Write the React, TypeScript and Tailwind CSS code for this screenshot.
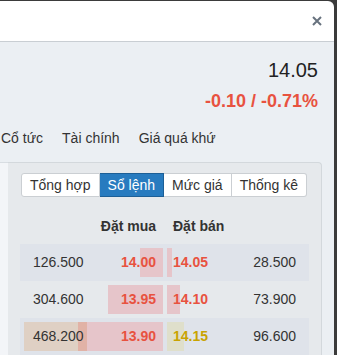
import React from "react";

type Row = {
  bv: string;
  bp: string;
  sp: string;
  sv: string;
  bw: number;
  sw: number;
  striped: boolean;
  vol?: number;
  yellow?: boolean;
};

const rows: Row[] = [
  { bv: "126.500", bp: "14.00", sp: "14.05", sv: "28.500", bw: 23, sw: 5, striped: true },
  { bv: "304.600", bp: "13.95", sp: "14.10", sv: "73.900", bw: 55, sw: 13, striped: false },
  { bv: "468.200", bp: "13.90", sp: "14.15", sv: "96.600", bw: 85, sw: 17, striped: true, vol: 63, yellow: true },
];

export default function App() {
  return (
    <div className="w-[337px] h-[355px] overflow-hidden bg-[#3b3b3b] pt-[1px] pr-[3px] font-['Liberation_Sans',Arial,sans-serif] text-[#333]">
      <div className="h-full bg-white rounded-tr-[6px] flex flex-col overflow-hidden">
        {/* header */}
        <div className="h-[41px] shrink-0 border-b border-[#c9ced3] flex items-center justify-end pr-[12px]">
          <svg width="10" height="10" viewBox="0 0 10 10" className="block">
            <path d="M1 1 L9 9 M9 1 L1 9" stroke="#67727e" strokeWidth="2" strokeLinecap="butt" />
          </svg>
        </div>
        {/* body */}
        <div className="flex-1 bg-[#ebeff3] flex flex-col">
          <div className="pt-[16px] pr-[16px] text-right">
            <div className="text-[20px] leading-[24px] text-[#222]">14.05</div>
            <div className="mt-[8px] text-[18px] leading-[22px] font-bold text-[#e8523f]">-0.10 / -0.71%</div>
          </div>
          <div className="mt-[16px] pl-[1px] flex gap-[19px] text-[14px] leading-[20px] text-[#333] whitespace-nowrap">
            <span>Cổ tức</span>
            <span>Tài chính</span>
            <span>Giá quá khứ</span>
          </div>
          <div className="mt-[14px] flex-1 flex">
            <div className="w-[8px] shrink-0 bg-[#f3f5f8] border-t border-[#d8dde2]" />
            <div className="w-[314px] shrink-0 bg-[#e6e9ec] border-t border-r border-[#d3d8dc] rounded-tr-[4px] px-[12px] pt-[10px]">
              {/* segmented */}
              <div className="mx-[1px] flex h-[24px] text-[14px] whitespace-nowrap">
                <div className="shrink-0 flex items-center px-[8px] border border-[#cbcfd3] bg-white rounded-l-[3px] text-[#333]">Tổng hợp</div>
                <div className="shrink-0 flex items-center px-[8px] border border-l-0 border-[#1d5f96] bg-[#287bbf] text-white">Sổ lệnh</div>
                <div className="shrink-0 flex items-center px-[8px] border border-l-0 border-[#cbcfd3] bg-white text-[#333]">Mức giá</div>
                <div className="shrink-0 flex items-center px-[8px] border border-l-0 border-[#cbcfd3] bg-white rounded-r-[3px] text-[#333]">Thống kê</div>
              </div>
              {/* column headers */}
              <div className="mt-[19px] mb-[8px] grid grid-cols-[145px_144px] text-[14px] leading-[20px] font-bold text-[#333]">
                <div className="text-right pr-[9px]">Đặt mua</div>
                <div className="pl-[8px]">Đặt bán</div>
              </div>
              {/* rows */}
              {rows.map((r) => (
                <div
                  key={r.bv}
                  className={`grid grid-cols-[145px_144px] h-[37px] text-[14px] leading-[37px] ${r.striped ? "bg-[#dfe3ea]" : ""}`}
                >
                  <div className="relative flex justify-between pl-[13px] pr-[9px]">
                    {r.vol ? (
                      <div className="absolute top-[4px] bottom-[4px] left-[4px] bg-[#dfd0c4]" style={{ width: r.vol }} />
                    ) : null}
                    <div className="absolute top-[4px] bottom-[4px] right-[2px] bg-[#e6c5ca]" style={{ width: r.bw }} />
                    {r.vol ? (
                      <div
                        className="absolute top-[4px] bottom-[4px] bg-[#e1b2a6]"
                        style={{ left: 143 - r.bw, width: 4 + r.vol - (143 - r.bw) }}
                      />
                    ) : null}
                    <span className="relative">{r.bv}</span>
                    <span className="relative font-bold text-[#e8523f]">{r.bp}</span>
                  </div>
                  <div className="relative flex justify-between pl-[8px] pr-[13px]">
                    <div
                      className={`absolute top-[4px] bottom-[4px] left-[2px] ${r.yellow ? "bg-[#dfdfcb]" : "bg-[#e6c5ca]"}`}
                      style={{ width: r.sw }}
                    />
                    <span className={`relative font-bold ${r.yellow ? "text-[#c9a300]" : "text-[#e8523f]"}`}>{r.sp}</span>
                    <span className="relative">{r.sv}</span>
                  </div>
                </div>
              ))}
            </div>
            <div className="flex-1" />
          </div>
        </div>
      </div>
    </div>
  );
}
